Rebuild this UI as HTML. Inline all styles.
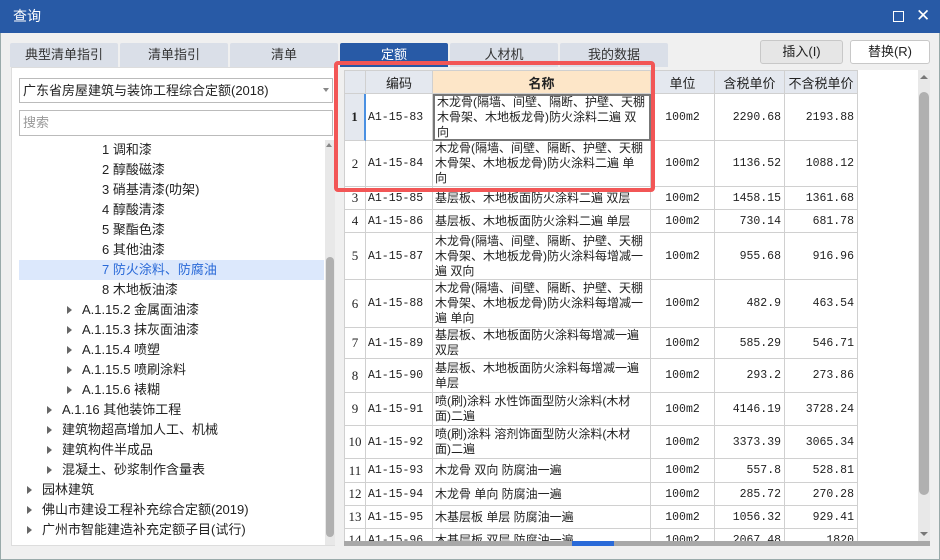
<!DOCTYPE html>
<html><head><meta charset="utf-8">
<style>
*{margin:0;padding:0;box-sizing:border-box}
body{width:940px;height:560px;background:#f0f0f0;font-family:"Liberation Sans","Noto Sans CJK SC",sans-serif;font-size:13px;color:#222;position:relative;overflow:hidden}
.abs{position:absolute}
.title{left:0;top:0;width:940px;height:33px;background:#285aa6;color:#fff;font-size:14px;line-height:33px;padding-left:13px}
.frame{left:0;top:33px;width:940px;height:527px;border:1px solid #9aa;border-top:none}
.tab{top:43px;height:24px;width:108px;background:#dadfe8;text-align:center;line-height:24px;font-size:13px;color:#333;border-radius:2px 2px 0 0}
.tab.on{background:#285aa6;color:#fff}
.left{left:11px;top:67px;width:324px;height:479px;background:#fff;border:1px solid #ddd}
.sel{left:19px;top:78px;width:314px;height:25px;border:1px solid #bbb;background:#fff;line-height:23px;padding-left:3px;font-size:13px}
.srch{left:19px;top:110px;width:314px;height:26px;border:1px solid #bbb;background:#fff;line-height:24px;padding-left:3px;color:#999}
.ti{height:20px;line-height:20px;font-size:13px;white-space:nowrap}
.tri{position:absolute;width:0;height:0;border-left:5px solid #666;border-top:4px solid transparent;border-bottom:4px solid transparent}
.grid{left:344px;top:70px;width:586px;height:476px;background:#fff}
.cell{position:absolute;border-right:1px solid #d0d0d0;border-bottom:1px solid #d0d0d0;font-family:"Liberation Mono",monospace;font-size:11.5px;overflow:hidden;white-space:nowrap;display:flex;align-items:center}
.h{background:#e4e8ef;justify-content:center;font-family:"Liberation Sans","Noto Sans CJK SC",sans-serif;font-size:13px}
</style></head><body>
<div class="abs title">查询</div>
<div class="abs" style="left:893px;top:11px;width:11px;height:11px;border:1.5px solid #fff"></div>
<div class="abs" style="left:916px;top:5px;color:#fff;font-size:17px;line-height:22px">✕</div>
<div class="abs frame"></div>
<div class="abs tab" style="left:10px">典型清单指引</div>
<div class="abs tab" style="left:120px">清单指引</div>
<div class="abs tab" style="left:230px">清单</div>
<div class="abs tab on" style="left:340px">定额</div>
<div class="abs tab" style="left:450px">人材机</div>
<div class="abs tab" style="left:560px">我的数据</div>
<div class="abs" style="left:760px;top:40px;width:83px;height:24px;border:1px solid #c8c8c8;background:#e6e6e6;border-radius:3px;text-align:center;line-height:22px">插入(I)</div>
<div class="abs" style="left:850px;top:40px;width:80px;height:24px;border:1px solid #c8c8c8;background:#fff;border-radius:3px;text-align:center;line-height:22px">替换(R)</div>

<div class="abs left"></div>
<div class="abs sel">广东省房屋建筑与装饰工程综合定额(2018)</div>
<div class="abs" style="left:323px;top:88px;border-top:4px solid #888;border-left:3px solid transparent;border-right:3px solid transparent"></div>
<div class="abs srch">搜索</div>
<div class="abs" style="left:325px;top:140px;width:10px;height:405px;background:#e8e8e8"></div>
<div class="abs" style="left:326px;top:257px;width:8px;height:280px;background:#b0b0b0;border-radius:4px"></div>
<div class="abs" style="left:326px;top:143px;border-bottom:4px solid #888;border-left:3px solid transparent;border-right:3px solid transparent"></div>
<div class="abs" style="left:19px;top:260px;width:305px;height:20px;background:#dce8fc"></div>
<div class="abs" style="left:0;top:140px;width:330px">
<div class="ti" style="padding-left:102px">1 调和漆</div>
<div class="ti" style="padding-left:102px">2 醇酸磁漆</div>
<div class="ti" style="padding-left:102px">3 硝基清漆(叻架)</div>
<div class="ti" style="padding-left:102px">4 醇酸清漆</div>
<div class="ti" style="padding-left:102px">5 聚酯色漆</div>
<div class="ti" style="padding-left:102px">6 其他油漆</div>
<div class="ti" style="padding-left:102px;color:#2a6ad8">7 防火涂料、防腐油</div>
<div class="ti" style="padding-left:102px">8 木地板油漆</div>
<div class="ti" style="padding-left:82px;position:relative"><span class="tri" style="left:67px;top:6px"></span>A.1.15.2 金属面油漆</div>
<div class="ti" style="padding-left:82px;position:relative"><span class="tri" style="left:67px;top:6px"></span>A.1.15.3 抹灰面油漆</div>
<div class="ti" style="padding-left:82px;position:relative"><span class="tri" style="left:67px;top:6px"></span>A.1.15.4 喷塑</div>
<div class="ti" style="padding-left:82px;position:relative"><span class="tri" style="left:67px;top:6px"></span>A.1.15.5 喷刷涂料</div>
<div class="ti" style="padding-left:82px;position:relative"><span class="tri" style="left:67px;top:6px"></span>A.1.15.6 裱糊</div>
<div class="ti" style="padding-left:62px;position:relative"><span class="tri" style="left:47px;top:6px"></span>A.1.16 其他装饰工程</div>
<div class="ti" style="padding-left:62px;position:relative"><span class="tri" style="left:47px;top:6px"></span>建筑物超高增加人工、机械</div>
<div class="ti" style="padding-left:62px;position:relative"><span class="tri" style="left:47px;top:6px"></span>建筑构件半成品</div>
<div class="ti" style="padding-left:62px;position:relative"><span class="tri" style="left:47px;top:6px"></span>混凝土、砂浆制作含量表</div>
<div class="ti" style="padding-left:42px;position:relative"><span class="tri" style="left:27px;top:6px"></span>园林建筑</div>
<div class="ti" style="padding-left:42px;position:relative"><span class="tri" style="left:27px;top:6px"></span>佛山市建设工程补充综合定额(2019)</div>
<div class="ti" style="padding-left:42px;position:relative"><span class="tri" style="left:27px;top:6px"></span>广州市智能建造补充定额子目(试行)</div>
</div>

<div class="abs grid"></div>
<div id="g" class="abs" style="left:344px;top:70px;width:514px;height:471px;overflow:hidden;border-left:1px solid #d0d0d0;border-top:1px solid #d0d0d0">
<div class="cell h" style="left:0;top:0;width:21px;height:23px"></div>
<div class="cell h" style="left:21px;top:0;width:67px;height:23px">编码</div>
<div class="cell h" style="left:88px;top:0;width:218px;height:23px;background:#fde6c8;font-weight:bold">名称</div>
<div class="cell h" style="left:306px;top:0;width:64px;height:23px">单位</div>
<div class="cell h" style="left:370px;top:0;width:70px;height:23px">含税单价</div>
<div class="cell h" style="left:440px;top:0;width:73px;height:23px">不含税单价</div>
</div>
<script>
var rows=[
[93,47,"1","A1-15-83",["木龙骨(隔墙、间壁、隔断、护壁、天棚","木骨架、木地板龙骨)防火涂料二遍 双","向"],"2290.68","2193.88"],
[140,46,"2","A1-15-84",["木龙骨(隔墙、间壁、隔断、护壁、天棚","木骨架、木地板龙骨)防火涂料二遍 单","向"],"1136.52","1088.12"],
[186,23,"3","A1-15-85",["基层板、木地板面防火涂料二遍 双层"],"1458.15","1361.68"],
[209,23,"4","A1-15-86",["基层板、木地板面防火涂料二遍 单层"],"730.14","681.78"],
[232,47,"5","A1-15-87",["木龙骨(隔墙、间壁、隔断、护壁、天棚","木骨架、木地板龙骨)防火涂料每增减一","遍 双向"],"955.68","916.96"],
[279,48,"6","A1-15-88",["木龙骨(隔墙、间壁、隔断、护壁、天棚","木骨架、木地板龙骨)防火涂料每增减一","遍 单向"],"482.9","463.54"],
[327,31,"7","A1-15-89",["基层板、木地板面防火涂料每增减一遍","双层"],"585.29","546.71"],
[358,34,"8","A1-15-90",["基层板、木地板面防火涂料每增减一遍","单层"],"293.2","273.86"],
[392,33,"9","A1-15-91",["喷(刷)涂料 水性饰面型防火涂料(木材","面)二遍"],"4146.19","3728.24"],
[425,33,"10","A1-15-92",["喷(刷)涂料 溶剂饰面型防火涂料(木材","面)二遍"],"3373.39","3065.34"],
[458,24,"11","A1-15-93",["木龙骨 双向 防腐油一遍"],"557.8","528.81"],
[482,23,"12","A1-15-94",["木龙骨 单向 防腐油一遍"],"285.72","270.28"],
[505,23,"13","A1-15-95",["木基层板 单层 防腐油一遍"],"1056.32","929.41"],
[528,23,"14","A1-15-96",["木基层板 双层 防腐油一遍"],"2067.48","1820"]];
var g=document.getElementById('g'),h='';
rows.forEach(function(r){var t=r[0]-70,H=r[1];
var b=r[2]=="1"?'font-weight:bold;background:#e4e8ef;border-right:2px solid #4a90e2;':'';
h+='<div class="cell" style="left:0;top:'+t+'px;width:21px;height:'+H+'px;justify-content:center;font-family:\'Liberation Serif\',serif;font-size:13px;'+b+'">'+r[2]+'</div>';
h+='<div class="cell" style="left:21px;top:'+t+'px;width:67px;height:'+H+'px;padding-left:2px">'+r[3]+'</div>';
var nb=r[2]=="1"?'border:2px solid #777;':'';
h+='<div class="cell" style="left:88px;top:'+t+'px;width:218px;height:'+H+'px;padding:0 1px 0 2px;line-height:15px;font-family:\'Liberation Sans\',\'Noto Sans CJK SC\',sans-serif;font-size:12px;'+nb+'"><div>'+r[4].join('<br>')+'</div></div>';
h+='<div class="cell" style="left:306px;top:'+t+'px;width:64px;height:'+H+'px;justify-content:center">100m2</div>';
h+='<div class="cell" style="left:370px;top:'+t+'px;width:70px;height:'+H+'px;justify-content:flex-end;padding-right:3px">'+r[5]+'</div>';
h+='<div class="cell" style="left:440px;top:'+t+'px;width:73px;height:'+H+'px;justify-content:flex-end;padding-right:3px">'+r[6]+'</div>';});
g.insertAdjacentHTML('beforeend',h);
</script>
<div class="abs" style="left:344px;top:541px;width:586px;height:5px;background:#a8a8a8"></div>
<div class="abs" style="left:572px;top:541px;width:42px;height:5px;background:#2a6ad8"></div>
<div class="abs" style="left:918px;top:70px;width:12px;height:471px;background:#e8e8e8"></div>
<div class="abs" style="left:919px;top:92px;width:10px;height:403px;background:#b0b0b0;border-radius:5px"></div>
<div class="abs" style="left:920px;top:75px;border-bottom:4px solid #777;border-left:4px solid transparent;border-right:4px solid transparent"></div>
<div class="abs" style="left:920px;top:532px;border-top:4px solid #777;border-left:4px solid transparent;border-right:4px solid transparent"></div>
<div class="abs" style="left:334px;top:61px;width:321px;height:131px;border:4px solid #f25656;border-radius:4px"></div>
</body></html>
